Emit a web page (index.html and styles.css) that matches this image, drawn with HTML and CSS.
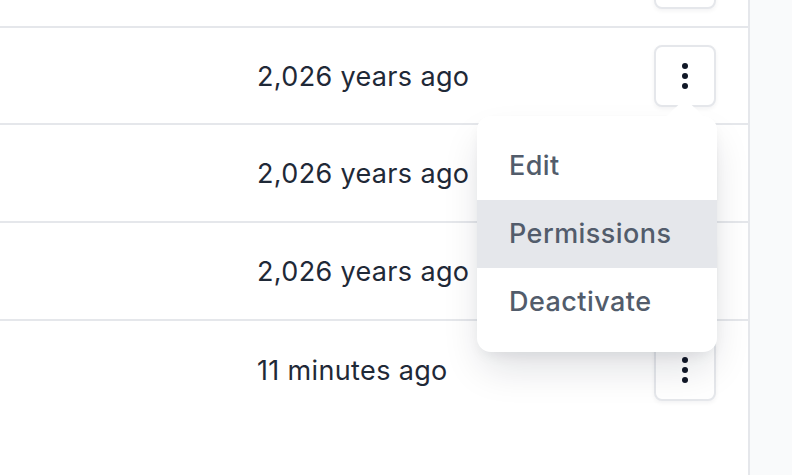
FILE: index.html
```html
<!DOCTYPE html>
<html>
<head>
<meta charset="utf-8">
<link rel="stylesheet" href="styles.css">
</head>
<body>
<div class="page">
  <div class="table">
    <div class="row first">
      <div class="cell name"></div>
      <div class="cell date"></div>
      <div class="cell actions"><button class="kebab"><span></span><span></span><span></span></button></div>
    </div>
    <div class="row">
      <div class="cell name"></div>
      <div class="cell date">2,026 years ago</div>
      <div class="cell actions">
        <button class="kebab"><span></span><span></span><span></span></button>
        <div class="menu">
          <div class="item">Edit</div>
          <div class="item active">Permissions</div>
          <div class="item">Deactivate</div>
        </div>
      </div>
    </div>
    <div class="row">
      <div class="cell name"></div>
      <div class="cell date">2,026 years ago</div>
      <div class="cell actions"><button class="kebab"><span></span><span></span><span></span></button></div>
    </div>
    <div class="row">
      <div class="cell name"></div>
      <div class="cell date">2,026 years ago</div>
      <div class="cell actions"><button class="kebab"><span></span><span></span><span></span></button></div>
    </div>
    <div class="row last">
      <div class="cell name"></div>
      <div class="cell date">11 minutes ago</div>
      <div class="cell actions"><button class="kebab"><span></span><span></span><span></span></button></div>
    </div>
  </div>
  <div class="side"></div>
</div>
</body>
</html>
```
FILE: styles.css
```css
html, body {
  margin: 0;
  padding: 0;
  height: 100%;
  overflow: hidden;
}
body {
  font-family: Inter, "Noto Sans", "Liberation Sans", sans-serif;
  background: #f9fafb;
}
.page {
  display: flex;
  height: 475px;
}
.table {
  width: 748px;
  background: #ffffff;
  border-right: 2px solid #e5e7eb;
  margin-top: -70px;
  height: 545px;
}
.side {
  flex: 1;
  background: #f9fafb;
}
.row {
  display: grid;
  grid-template-columns: 257px 1fr auto;
  align-items: center;
  height: 97.7px;
  box-sizing: border-box;
  border-bottom: 2px solid #e5e7eb;
}
.row.last {
  border-bottom: none;
}
.date {
  font-size: 27px;
  line-height: 34px;
  padding-top: 2px;
  color: #1f2937;
  letter-spacing: 0.35px;
}
.actions {
  position: relative;
  padding-right: 32px;
  display: flex;
  align-items: center;
}
.kebab {
  width: 62px;
  height: 62px;
  box-sizing: border-box;
  background: #ffffff;
  border: 2px solid #e5e7eb;
  border-radius: 8px;
  box-shadow: 0 2px 4px rgba(17, 24, 39, 0.05);
  display: flex;
  flex-direction: column;
  align-items: center;
  justify-content: center;
  gap: 4px;
  padding: 0;
}
.kebab span {
  width: 6px;
  height: 6px;
  border-radius: 50%;
  background: #111827;
}
.menu {
  position: absolute;
  top: calc(100% + 9px);
  right: 31px;
  width: 240px;
  box-sizing: border-box;
  padding: 16px 0;
  background: #ffffff;
  border-radius: 14px;
  box-shadow: 0 20px 40px -6px rgba(17, 24, 39, 0.14), 0 6px 14px -4px rgba(17, 24, 39, 0.08);
  z-index: 10;
}
.menu::before {
  content: "";
  position: absolute;
  top: -17px;
  right: 12px;
  width: 0;
  height: 0;
  border-left: 20px solid transparent;
  border-right: 20px solid transparent;
  border-bottom: 18px solid #ffffff;
}
.item {
  height: 68px;
  display: flex;
  align-items: center;
  padding-left: 32px;
  font-size: 27px;
  font-weight: 500;
  letter-spacing: 0.45px;
  color: #525c6b;
}
.item.active {
  background: #e5e7eb;
}
```
